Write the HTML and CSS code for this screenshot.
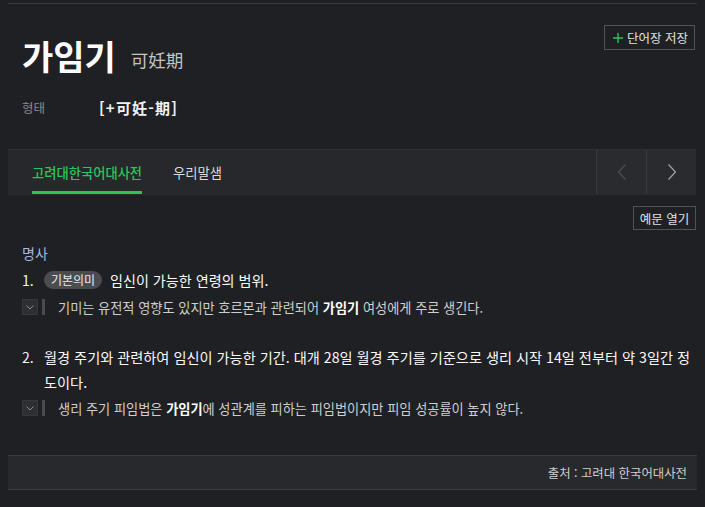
FILE: index.html
```html
<!DOCTYPE html>
<html lang="ko">
<head>
<meta charset="utf-8">
<title>가임기</title>
<link rel="stylesheet" href="styles.css">
</head>
<body>
<div class="page">
  <header class="head">
    <div class="head-main">
      <div class="title-row">
        <h1 class="word">가임기</h1>
        <span class="hanja">可妊期</span>
      </div>
      <div class="form-row">
        <span class="form-label">형태</span>
        <span class="form-value">[+可妊-期]</span>
      </div>
    </div>
    <button class="save-btn"><svg class="plus" width="10" height="10" viewBox="0 0 10 10"><path d="M5 0 V10 M0 5 H10" stroke="currentColor" stroke-width="1.4" fill="none"/></svg>단어장 저장</button>
  </header>

  <nav class="tabbar">
    <div class="tabs">
      <span class="tab active">고려대한국어대사전</span>
      <span class="tab">우리말샘</span>
    </div>
    <div class="navs">
      <span class="nav-btn dim"><svg width="10" height="18" viewBox="0 0 10 18"><path d="M8.5 1.5 L1.5 9 L8.5 16.5" fill="none" stroke="currentColor" stroke-width="1.1"/></svg></span>
      <span class="nav-btn"><svg width="10" height="18" viewBox="0 0 10 18"><path d="M1.5 1.5 L8.5 9 L1.5 16.5" fill="none" stroke="currentColor" stroke-width="1.1"/></svg></span>
    </div>
  </nav>

  <div class="toolbar">
    <button class="ex-btn">예문 열기</button>
  </div>

  <section class="body">
    <div class="pos">명사</div>
    <ol class="senses">
      <li class="sense sense-1">
        <div class="def-row">
          <span class="num">1.</span>
          <div class="def"><span class="badge">기본의미</span>임신이 가능한 연령의 범위.</div>
        </div>
        <div class="ex-row">
          <span class="toggle"><svg width="8" height="5" viewBox="0 0 8 5"><path d="M0.5 0.5 L4 4 L7.5 0.5" fill="none" stroke="currentColor" stroke-width="1"/></svg></span>
          <span class="ex-bar"></span>
          <span class="ex-text">기미는 유전적 영향도 있지만 호르몬과 관련되어 <b>가임기</b> 여성에게 주로 생긴다.</span>
        </div>
      </li>
      <li class="sense sense-2">
        <div class="def-row">
          <span class="num">2.</span>
          <div class="def">월경 주기와 관련하여 임신이 가능한 기간. 대개 28일 월경 주기를 기준으로 생리 시작 14일 전부터 약 3일간 정도이다.</div>
        </div>
        <div class="ex-row">
          <span class="toggle"><svg width="8" height="5" viewBox="0 0 8 5"><path d="M0.5 0.5 L4 4 L7.5 0.5" fill="none" stroke="currentColor" stroke-width="1"/></svg></span>
          <span class="ex-bar"></span>
          <span class="ex-text">생리 주기 피임법은 <b>가임기</b>에 성관계를 피하는 피임법이지만 피임 성공률이 높지 않다.</span>
        </div>
      </li>
    </ol>
  </section>

  <footer class="source">출처 : 고려대 한국어대사전</footer>
</div>
</body>
</html>
```

FILE: styles.css
```css
* { box-sizing: border-box; }
html, body {
  margin: 0;
  padding: 0;
  background: #1f2023;
}
body {
  font-family: "Noto Sans CJK KR", "Noto Sans", sans-serif;
  color: #eee;
  height: 507px;
  overflow: hidden;
}
.page {
  margin: 3px 8px 0;
  border-top: 1px solid #38393c;
}
.head {
  display: flex;
  justify-content: space-between;
  align-items: flex-start;
  padding: 0 2px 0 14px;
}
.head-main {
  padding-top: 32px;
}
.title-row {
  display: flex;
  align-items: center;
  gap: 15px;
  height: 40px;
}
.word {
  margin: 0;
  font-size: 34px;
  line-height: 40px;
  font-weight: 700;
  color: #fff;
}
.hanja {
  font-size: 17.5px;
  line-height: 25px;
  padding-top: 7px;
  color: #c4c4c4;
}
.form-row {
  display: flex;
  align-items: center;
  margin-top: 21px;
  height: 20px;
  margin-bottom: 32px;
}
.form-label {
  width: 77px;
  font-size: 12.5px;
  color: #8a8a8a;
}
.form-value {
  font-size: 15px;
  font-weight: 700;
  letter-spacing: 1.2px;
  color: #f2f2f2;
}
.save-btn {
  margin-top: 21px;
  height: 25px;
  width: 91px;
  padding: 0 0 0 2px;
  background: transparent;
  border: 1px solid #515255;
  color: #e2e2e2;
  font-family: inherit;
  font-size: 12.5px;
  display: flex;
  align-items: center;
  justify-content: center;
  gap: 4px;
}
.plus {
  color: #2bc45a;
}
.tabbar {
  display: flex;
  justify-content: space-between;
  height: 46px;
  background: #27282b;
  border-top: 1px solid #2e2f32;
  border-bottom: 1px solid #2b2c2f;
  margin-right: 1px;
}
.tabs {
  display: flex;
  padding-left: 24px;
  gap: 31px;
}
.tab {
  display: flex;
  align-items: center;
  font-size: 13.3px;
  color: #dcdcdc;
  border-bottom: 3px solid transparent;
  padding-top: 3px;
}
.tab.active {
  color: #2bc45a;
  font-weight: 500;
  border-bottom-color: #2bc45a;
}
.navs {
  display: flex;
}
.nav-btn {
  width: 50px;
  display: flex;
  align-items: center;
  justify-content: center;
  border-left: 1px solid #3a3b3e;
  background: #2a2b2e;
  color: #a8a8a8;
}
.nav-btn.dim {
  color: #4e4f52;
}
.toolbar {
  display: flex;
  justify-content: flex-end;
  padding-right: 1px;
  margin-top: 11px;
}
.ex-btn {
  height: 24px;
  width: 63px;
  padding: 0;
  background: transparent;
  border: 1px solid #515255;
  color: #e2e2e2;
  font-family: inherit;
  font-size: 12.5px;
}
.body {
  padding-left: 14px;
}
.pos {
  margin-top: 13px;
  font-size: 14px;
  line-height: 20px;
  color: #a9b9dc;
}
.senses {
  list-style: none;
  margin: 0;
  padding: 0;
}
.sense-1 { margin-top: 5px; }
.sense-2 { margin-top: 28px; }
.def-row {
  display: flex;
}
.num {
  width: 22px;
  flex: none;
  font-size: 14px;
  line-height: 25px;
  color: #f2f2f2;
}
.def {
  flex: 1;
  color: #fafafa;
  line-height: 25px;
  word-break: break-all;
}
.sense-1 .def {
  font-size: 14.1px;
}
.sense-2 .def {
  font-size: 14.2px;
}
.badge {
  display: inline-block;
  height: 18px;
  line-height: 18px;
  width: 58px;
  text-align: center;
  border-radius: 9px;
  background: #4b4c50;
  color: #ececec;
  font-size: 12px;
  margin-right: 8px;
  vertical-align: 1px;
}
.ex-row {
  display: flex;
  align-items: center;
  height: 20px;
}
.sense-1 .ex-row { margin-top: 4px; }
.sense-2 .ex-row { margin-top: 3px; }
.toggle {
  width: 16px;
  height: 16px;
  display: flex;
  align-items: center;
  justify-content: center;
  background: #2e2f32;
  border: 1px solid #36373a;
  color: #8b8b8b;
}
.ex-bar {
  width: 3px;
  height: 16px;
  background: #4a4b4e;
  margin-left: 4px;
  margin-right: 13px;
}
.ex-text {
  font-size: 13.2px;
  color: #cfcfcf;
}
.ex-text b {
  color: #fff;
  font-weight: 700;
}
.source {
  margin-top: 37px;
  height: 35px;
  background: #28292c;
  border-top: 1px solid #3b3c3f;
  border-bottom: 1px solid #3b3c3f;
  display: flex;
  align-items: center;
  justify-content: flex-end;
  padding-right: 10px;
  font-size: 12.4px;
  color: #cfcfcf;
}
```
